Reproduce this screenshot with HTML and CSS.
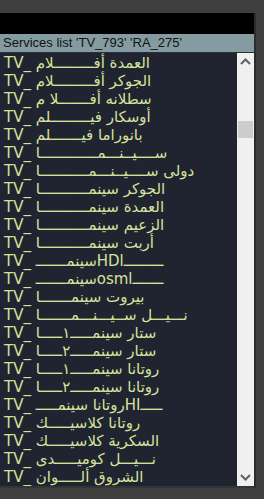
FILE: index.html
```html
<!DOCTYPE HTML>
<html>
  <head>
    <title>Services list</title>
    <meta charset="utf-8" />
    <link rel="stylesheet" href="styles.css">
  </head>
  <body>
    <div class="frame">
      <div class="topbar"></div>
      <div class="title">Services list 'TV_793' 'RA_275'</div>
      <div class="panel">
        <ul class="list">
          <li>TV_ العمدة أفـــــــــلام</li>
          <li>TV_ الجوكر أفـــــــــلام</li>
          <li>TV_ سطلانه أفـــــــلا م</li>
          <li>TV_ أوسكار فيـــــــــلم</li>
          <li>TV_ بانوراما فيـــــــلم</li>
          <li>TV_ ســــيــنـــمـــــــــــــا</li>
          <li>TV_ دولى ســــيــنـــمـــــــــــا</li>
          <li>TV_ الجوكر سينمـــــــــــا</li>
          <li>TV_ العمدة سينمـــــــــــا</li>
          <li>TV_ الزعيم سينمـــــــــــا</li>
          <li>TV_ أربت سينمـــــــــــا</li>
          <li>TV_ سينمـــــــHDlـــــــــ</li>
          <li>TV_ سينمـــــــosmlـــــــ</li>
          <li>TV_ بيروت سينمـــــــا</li>
          <li>TV_ نـــيـــل ســيـــنـــمـــــــا</li>
          <li>TV_ ستار سينمـــــ١ـــــا</li>
          <li>TV_ ستار سينمـــــ٢ـــــا</li>
          <li>TV_ روتانا سينمـــــ١ـــــا</li>
          <li>TV_ روتانا سينمـــــ٢ـــــا</li>
          <li>TV_ روتانا سينمـــــHIـــــ</li>
          <li>TV_ روتانا كلاسيـــــك</li>
          <li>TV_ السكرية كلاسيـــــك</li>
          <li>TV_ نـــيـــل كوميـــــدى</li>
          <li>TV_ الشروق ألـــــوان</li>
        </ul>
        <div class="scrollbar">
          <div class="arrow">
            <svg width="11" height="7" viewBox="0 0 11 7"><path d="M1 6 L5.5 1.5 L10 6" fill="none" stroke="#606060" stroke-width="2"/></svg>
          </div>
          <div class="track"><div class="thumb"></div></div>
          <div class="arrow">
            <svg width="11" height="7" viewBox="0 0 11 7"><path d="M1 1 L5.5 5.5 L10 1" fill="none" stroke="#606060" stroke-width="2"/></svg>
          </div>
        </div>
      </div>
    </div>
  </body>
</html>
```
FILE: styles.css
```css
*{
  margin:0;
  padding:0;
}
body{
  background-color:#3f3f3f;
  font-family:"DejaVu Sans", sans-serif;
}
.frame{
  margin-top:13px;
  width:254px;
  border-right:2px solid #2c2c2c;
  border-bottom:2px solid #353535;
}
.topbar{
  height:21px;
  background-color:#000;
}
.title{
  height:18px;
  line-height:18px;
  padding-left:3px;
  font-family:"Liberation Sans", sans-serif;
  font-size:13px;
  color:#111;
  background-color:#849ca1;
  border-bottom:1px solid #2a2e36;
  white-space:nowrap;
  overflow:hidden;
}
.panel{
  display:flex;
  height:433px;
  background-color:#202430;
}
.list{
  flex:1;
  list-style:none;
  overflow:hidden;
  padding-top:1px;
}
.list li{
  height:18px;
  line-height:18px;
  padding-left:4px;
  font-size:15px;
  color:#d6e29c;
  white-space:nowrap;
}
.scrollbar{
  width:17px;
  display:flex;
  flex-direction:column;
  background-color:#f0f0f0;
}
.arrow{
  height:17px;
  display:flex;
  align-items:center;
  justify-content:center;
}
.track{
  flex:1;
}
.thumb{
  margin:51px 1px 0 1px;
  height:17px;
  background-color:#cdcdcd;
}
```
